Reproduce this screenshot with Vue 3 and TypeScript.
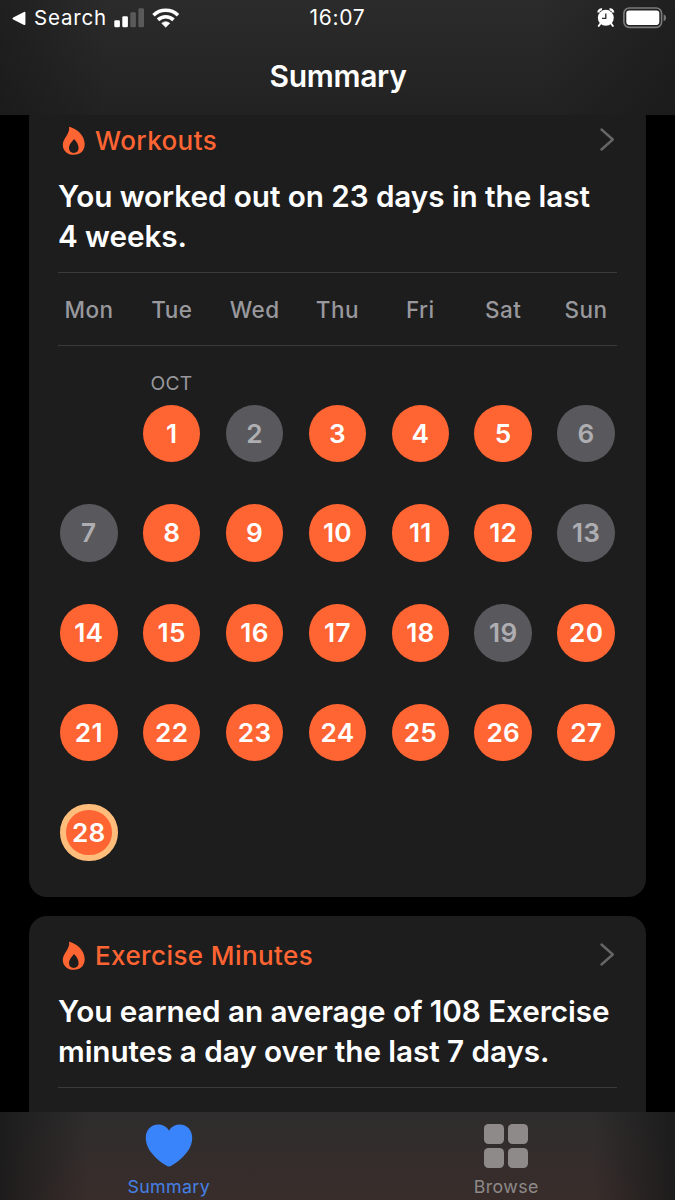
<script setup lang="ts">
interface Day {
  n: number
  state: 'active' | 'rest' | 'today'
}

const weekdays: string[] = ['Mon', 'Tue', 'Wed', 'Thu', 'Fri', 'Sat', 'Sun']
const restDays: number[] = [2, 6, 7, 13, 19]
const today = 28

const days: Day[] = Array.from({ length: today }, (_, i) => {
  const n = i + 1
  return { n, state: n === today ? 'today' : restDays.includes(n) ? 'rest' : 'active' }
})

const flame =
  'M7 .7C13.500 2 22.700 8.500 22.700 18 22.700 24.800 18.200 28.800 11.800 28.800 5.300 28.800 .8 24.800 .8 18.700 .8 12.500 8.500 7.500 7 .7Z' +
  'M12 13C10.200 15.500 7 18.200 7 22.300 7 25.200 9.200 26.900 11.700 26.900 14.500 26.900 16.600 25.200 16.600 22 16.600 18 14 15 12 13Z'
</script>

<template>
  <div class="screen">
    <header class="top">
      <div class="status">
        <div class="status-left">
          <svg class="back" width="14" height="15" viewBox="0 0 14 15"><path d="M1.200 6.600 12 .9q1.400-.6 1.400 .9v11.200q0 1.500-1.400 .9L1.200 8.400q-1.500-.9 0-1.800z" fill="#fff" /></svg>
          <span class="search">Search</span>
          <svg class="signal" width="31" height="20" viewBox="0 0 31 20">
            <rect x=".3" y="12.300" width="5.600" height="7" rx="1.300" fill="#fff" />
            <rect x="8.300" y="8.300" width="5.600" height="11" rx="1.300" fill="#fff" />
            <rect x="16.300" y="4.300" width="5.600" height="15" rx="1.300" fill="#5a5a5a" />
            <rect x="24.400" y=".3" width="5.600" height="19" rx="1.300" fill="#5a5a5a" />
          </svg>
          <svg class="wifi" width="28" height="20" viewBox="0 0 28 20">
            <g fill="none" stroke="#fff" stroke-width="3.600">
              <path d="M1.500 7.200a17.600 17.600 0 0 1 24.500 0" />
              <path d="M6 11.900a11.200 11.200 0 0 1 15.500 0" />
            </g>
            <path d="M13.750 19.300 9.700 15.300a5.800 5.800 0 0 1 8.100 0z" fill="#fff" stroke="#fff" stroke-width=".6" stroke-linejoin="round" />
          </svg>
        </div>
        <span class="time">16:07</span>
        <div class="status-right">
          <svg class="alarm" width="18" height="19" viewBox="0 0 18 19">
            <circle cx="8.800" cy="9.800" r="8" fill="#fff" />
            <path d="M1.500 4.400A3 3 0 0 1 5 1.400M12.600 1.400A3 3 0 0 1 16.100 4.400" fill="none" stroke="#fff" stroke-width="2.400" />
            <path d="M3.600 15.400 1.700 18M14 15.400l1.900 2.600" stroke="#fff" stroke-width="1.800" stroke-linecap="round" />
            <path d="M8.800 5.400v4.900H5" fill="none" stroke="#2a2a2a" stroke-width="1.300" />
          </svg>
          <svg class="battery" width="44" height="22" viewBox="0 0 44 22">
            <rect x=".9" y="1" width="37.700" height="19.400" rx="5.400" fill="none" stroke="#7b7b7b" stroke-width="1.600" />
            <rect x="3.300" y="3.500" width="33" height="14.400" rx="2.800" fill="#fff" />
            <path d="M40.700 7.200q2.400 1 2.400 3.500t-2.400 3.500z" fill="#7b7b7b" />
          </svg>
        </div>
      </div>
      <h1 class="title">Summary</h1>
    </header>

    <main class="content">
      <section class="card workouts">
        <div class="card-head">
          <svg class="flame" width="23" height="30" viewBox="0 0 23 30"><path fill-rule="evenodd" :d="flame" fill="#ff6433" /></svg>
          <h2 class="name">Workouts</h2>
          <svg class="chevron" width="15" height="23" viewBox="0 0 15 23"><path d="M1.500 1.500 12.800 11.500 1.500 21.500" fill="none" stroke="#666668" stroke-width="2.400" stroke-linecap="round" stroke-linejoin="round" /></svg>
        </div>
        <p class="headline">You worked out on 23 days in the last<br />4 weeks.</p>
        <div class="weekdays">
          <span v-for="d in weekdays" :key="d" class="weekday">{{ d }}</span>
        </div>
        <div class="months"><span class="month">OCT</span></div>
        <div class="days">
          <span v-for="d in days" :key="d.n" class="day" :class="d.state">{{ d.n }}</span>
        </div>
      </section>

      <section class="card exercise">
        <div class="card-head">
          <svg class="flame" width="23" height="30" viewBox="0 0 23 30"><path fill-rule="evenodd" :d="flame" fill="#ff6433" /></svg>
          <h2 class="name">Exercise Minutes</h2>
          <svg class="chevron" width="15" height="23" viewBox="0 0 15 23"><path d="M1.500 1.500 12.800 11.500 1.500 21.500" fill="none" stroke="#666668" stroke-width="2.400" stroke-linecap="round" stroke-linejoin="round" /></svg>
        </div>
        <p class="headline">You earned an average of 108 Exercise<br />minutes a day over the last 7 days.</p>
        <div class="rule"></div>
      </section>
    </main>

    <nav class="tabs">
      <div class="tab selected">
        <svg class="tab-icon" width="48" height="44" viewBox="0 0 48 44"><path d="M24 6.500C21.500 2.500 17.500 .6 13.200 .6 6 .6 .8 6.300 .8 14 .8 26.500 13 36.500 21.300 41.600Q24 43.300 26.700 41.600C35 36.500 47.200 26.500 47.200 14 47.200 6.300 42 .6 34.800 .6 30.500 .6 26.500 2.500 24 6.500Z" fill="#3a84fb" /></svg>
        <span class="tab-label">Summary</span>
      </div>
      <div class="tab">
        <svg class="tab-icon" width="44" height="44" viewBox="0 0 44 44">
          <g fill="#8e8a89">
            <rect width="20" height="20" rx="4.500" />
            <rect x="24" width="20" height="20" rx="4.500" />
            <rect y="24" width="20" height="20" rx="4.500" />
            <rect x="24" y="24" width="20" height="20" rx="4.500" />
          </g>
        </svg>
        <span class="tab-label">Browse</span>
      </div>
    </nav>
  </div>
</template>

<style>
html,
body {
  margin: 0;
  background: #000;
}
</style>

<style scoped>
.screen {
  width: 675px;
  height: 1200px;
  display: flex;
  flex-direction: column;
  overflow: hidden;
  background: #000;
  color: #fff;
  font-family: Inter, "Liberation Sans", sans-serif;
}
.top {
  flex: none;
  height: 115px;
  box-sizing: border-box;
  background:
    linear-gradient(90deg, rgba(20, 20, 20, 0.5), rgba(20, 20, 20, 0) 16%, rgba(20, 20, 20, 0) 80%, rgba(20, 20, 20, 0.5)),
    linear-gradient(#2b2b2b, #222);
}
.status {
  display: grid;
  grid-template-columns: 1fr auto 1fr;
  height: 36px;
  align-items: center;
  font-size: 20.500px;
  line-height: 36px;
}
.status-left,
.status-right {
  display: flex;
  align-items: center;
}
.status-right {
  justify-content: flex-end;
  padding-right: 8px;
}
.back {
  margin-left: 12px;
}
.search {
  margin-left: 8px;
  width: 79px;
  letter-spacing: 0.800px;
}
.signal {
  margin-left: 1px;
}
.wifi {
  margin-left: 7px;
}
.time {
  font-size: 21px;
  letter-spacing: 0.700px;
}
.alarm {
  margin-right: 8px;
  margin-top: -1px;
}
.title {
  margin: 20px 0 0;
  padding-left: 1px;
  text-align: center;
  font-size: 30px;
  font-weight: 600;
  line-height: 40px;
  letter-spacing: -0.300px;
}
.content {
  flex: 1;
  min-height: 0;
  overflow: hidden;
}
.card {
  margin: 0 29px 19px;
  padding: 25px 29px 0;
  box-sizing: border-box;
  border-radius: 18px;
  background: #1d1d1d;
}
.workouts {
  height: 796px;
  margin-top: -14px;
}
.exercise {
  height: 300px;
}
.card-head {
  display: flex;
  align-items: center;
  height: 30px;
}
.flame {
  margin-left: 4px;
}
.name {
  margin: 0 auto 0 10px;
  font-size: 26px;
  line-height: 30px;
  font-weight: 500;
  letter-spacing: 0.400px;
  color: #ff6433;
}
.chevron {
  margin: -3px 2px 0 0;
}
.headline {
  margin: 20px -20px 16px 0;
  font-size: 29.700px;
  font-weight: 600;
  line-height: 40px;
  letter-spacing: -0.070px;
  white-space: nowrap;
}
.weekdays {
  display: grid;
  grid-template-columns: repeat(7, 58px);
  justify-content: space-between;
  height: 74px;
  box-sizing: border-box;
  padding: 0 2px;
  border-top: 1px solid #3a3a3b;
  border-bottom: 1px solid #3a3a3b;
}
.weekday {
  justify-self: center;
  font-size: 22.500px;
  font-weight: 500;
  line-height: 74px;
  height: 72px;
  letter-spacing: 0.500px;
  color: #98989d;
}
.months {
  display: flex;
  height: 58.500px;
  padding-left: 84.500px;
}
.month {
  width: 58px;
  margin-top: 27px;
  text-align: center;
  font-size: 19.300px;
  line-height: 20px;
  letter-spacing: 0.300px;
  color: #98989d;
}
.days {
  display: grid;
  grid-template-columns: repeat(7, 57.600px);
  justify-content: space-between;
  row-gap: 42.200px;
  padding: 0 2px;
}
.day {
  height: 57.600px;
  box-sizing: border-box;
  border-radius: 50%;
  text-align: center;
  font-size: 26.200px;
  font-weight: 600;
  line-height: 58px;
  letter-spacing: 0.300px;
  background: #ff6433;
}
.day:first-child {
  grid-column-start: 2;
}
.rest {
  background: #59595d;
  color: #aeaeb2;
}
.today {
  border: 6px solid #ffbd7c;
  line-height: 46px;
}
.rule {
  height: 1px;
  background: #3a3a3b;
}
.tabs {
  flex: none;
  display: grid;
  grid-template-columns: 1fr 1fr;
  height: 88px;
  background:
    linear-gradient(90deg, rgba(26, 26, 26, 0.900), rgba(26, 26, 26, 0) 13%, rgba(26, 26, 26, 0) 88%, rgba(26, 26, 26, 0.900)),
    linear-gradient(#2e2d2d, #392d2b);
}
.tab {
  display: flex;
  flex-direction: column;
  align-items: center;
  padding-top: 12px;
  color: #8e8a89;
}
.tab-icon {
  flex: none;
}
.tab-label {
  margin-top: 9px;
  font-size: 17.800px;
  line-height: 20px;
  letter-spacing: 0.350px;
}
.selected .tab-label {
  color: #4581e5;
}
</style>
